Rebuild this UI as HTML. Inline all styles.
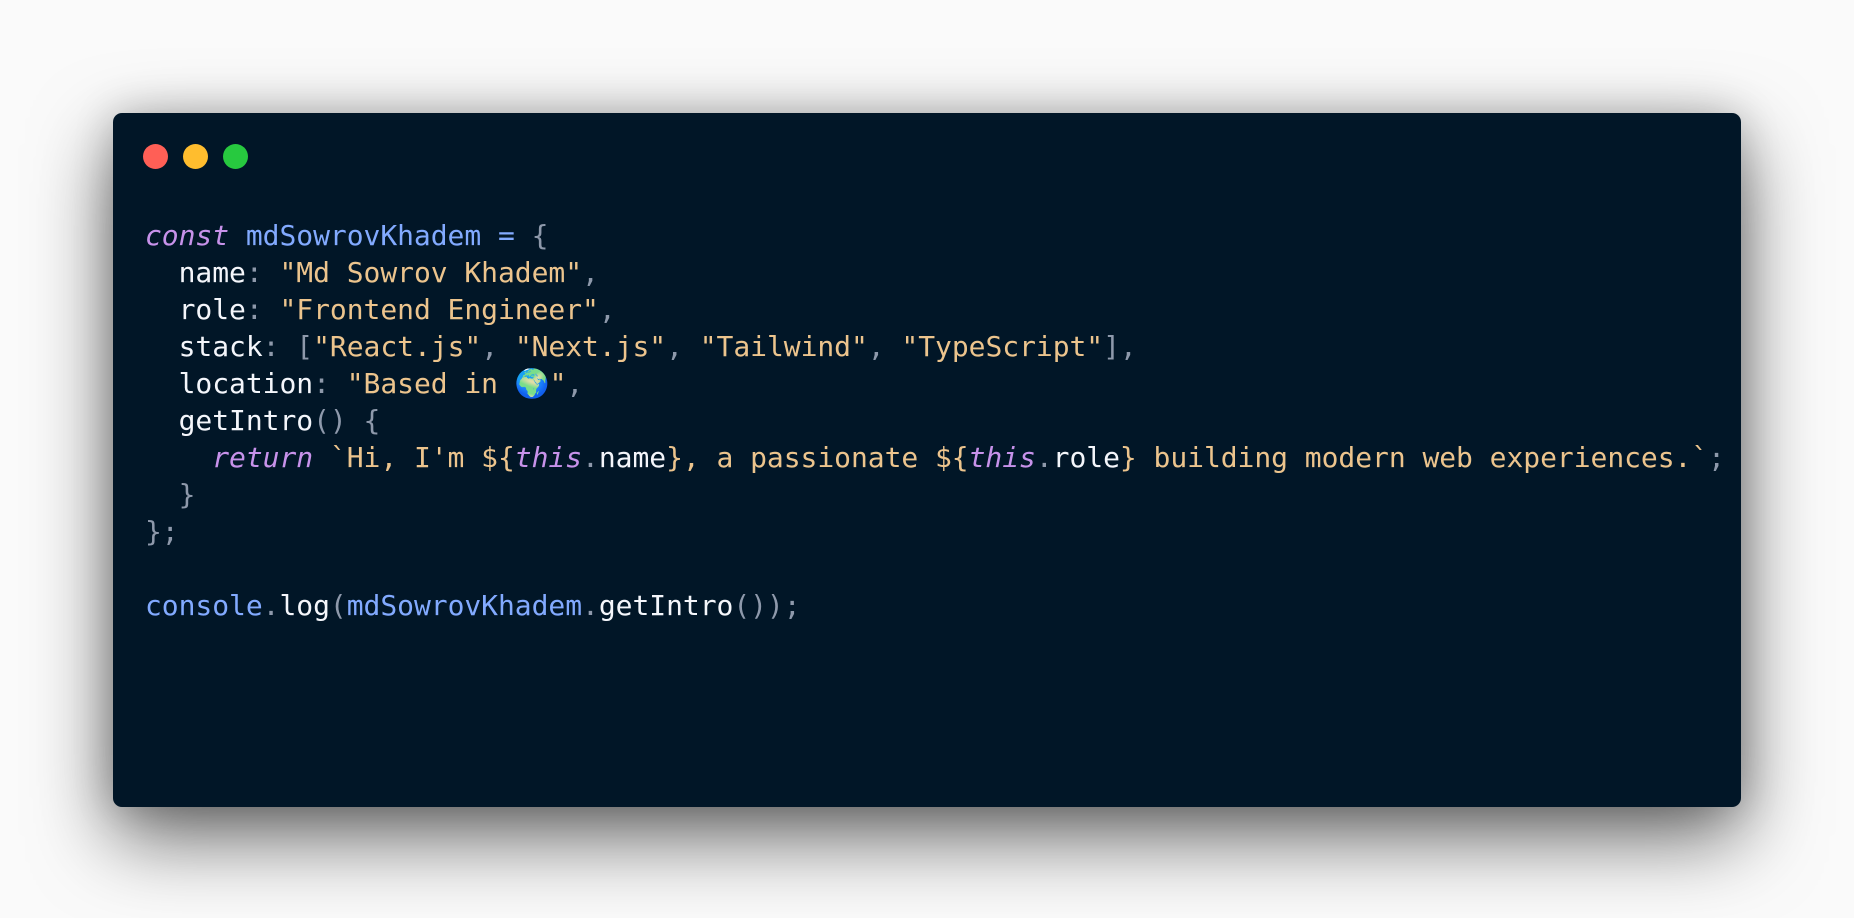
<!DOCTYPE html>
<html><head><meta charset="utf-8"><style>
html,body{margin:0;padding:0;width:1854px;height:918px;overflow:hidden;background:#fafafa;}
.win{position:absolute;left:113px;top:113px;width:1628px;height:694px;background:#011627;border-radius:9px;box-shadow:0 30px 80px rgba(0,0,0,.6),0 0 40px rgba(0,0,0,.18);}
.dot{position:absolute;top:144px;width:25px;height:25px;border-radius:50%;}
pre{position:absolute;left:145px;top:217px;margin:0;font-family:"DejaVu Sans Mono","Liberation Mono",monospace;font-size:28px;line-height:37px;letter-spacing:-0.05px;color:#d6deeb;}
.k{color:#c792ea;font-style:italic}
.b{color:#82aaff}
.s{color:#ecc48d}
.p{color:#8e99ab}
.w{color:#f4f6fb}
</style></head><body>
<div class="win"></div>
<div class="dot" style="left:143px;background:#ff5f56"></div>
<div class="dot" style="left:183px;background:#ffbd2e"></div>
<div class="dot" style="left:223px;background:#27c93f"></div>
<pre><span class="k">const</span> <span class="b">mdSowrovKhadem</span> <span class="b">=</span> <span class="p">{</span>
  <span class="w">name</span><span class="p">:</span> <span class="s">"Md Sowrov Khadem"</span><span class="p">,</span>
  <span class="w">role</span><span class="p">:</span> <span class="s">"Frontend Engineer"</span><span class="p">,</span>
  <span class="w">stack</span><span class="p">:</span> <span class="p">[</span><span class="s">"React.js"</span><span class="p">,</span> <span class="s">"Next.js"</span><span class="p">,</span> <span class="s">"Tailwind"</span><span class="p">,</span> <span class="s">"TypeScript"</span><span class="p">],</span>
  <span class="w">location</span><span class="p">:</span> <span class="s">"Based in 🌍"</span><span class="p">,</span>
  <span class="w">getIntro</span><span class="p">()</span> <span class="p">{</span>
    <span class="k">return</span> <span class="s">`Hi, I'm ${</span><span class="k">this</span><span class="p">.</span><span class="w">name</span><span class="s">}, a passionate ${</span><span class="k">this</span><span class="p">.</span><span class="w">role</span><span class="s">} building modern web experiences.`</span><span class="p">;</span>
  <span class="p">}</span>
<span class="p">};</span>

<span class="b">console</span><span class="p">.</span><span class="w">log</span><span class="p">(</span><span class="b">mdSowrovKhadem</span><span class="p">.</span><span class="w">getIntro</span><span class="p">());</span></pre>
</body></html>
